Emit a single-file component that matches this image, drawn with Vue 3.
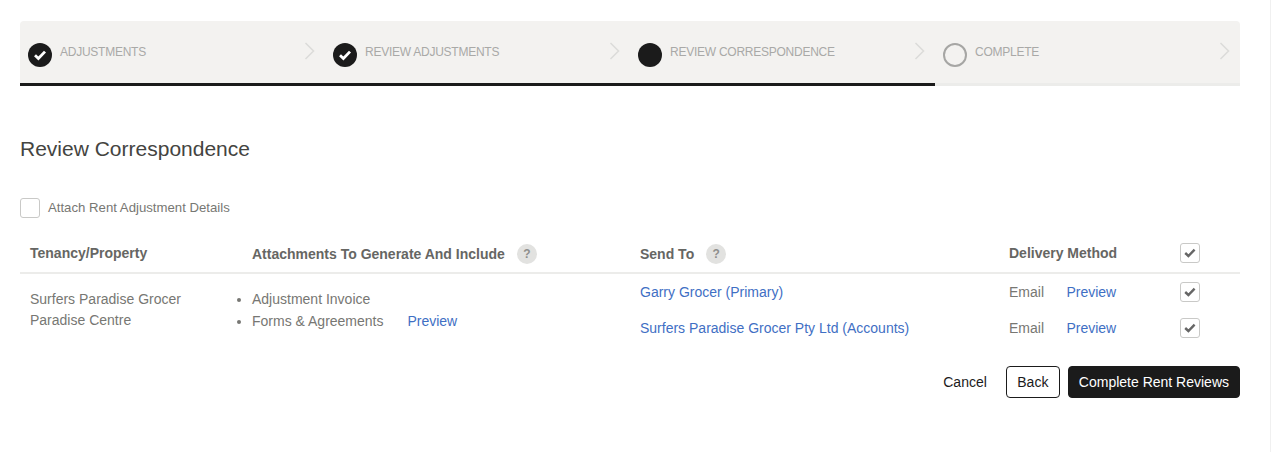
<script setup>
const steps = [
  { label: "ADJUSTMENTS", state: "done" },
  { label: "REVIEW ADJUSTMENTS", state: "done" },
  { label: "REVIEW CORRESPONDENCE", state: "current" },
  { label: "COMPLETE", state: "todo" },
];

const recipients = [
  { name: "Garry Grocer (Primary)" },
  { name: "Surfers Paradise Grocer Pty Ltd (Accounts)" },
];
</script>

<template>
  <div class="page">
    <div class="wizard">
      <div v-for="step in steps" :key="step.label" class="step">
        <span class="dot" :class="step.state">
          <svg v-if="step.state === 'done'" width="14" height="12" viewBox="0 0 14 12">
            <path d="M2 6.2 5.4 9.5 12 2.6" fill="none" stroke="#fff" stroke-width="2.8" />
          </svg>
        </span>
        <span class="step-label">{{ step.label }}</span>
        <svg class="chev" width="11" height="18" viewBox="0 0 11 18">
          <path d="M1.5 1 9.5 9 1.5 17" fill="none" stroke="#dcdcda" stroke-width="1.6" />
        </svg>
      </div>
      <div class="progress"><div class="progress-fill"></div></div>
    </div>

    <h2 class="title">Review Correspondence</h2>

    <div class="attach">
      <span class="box"></span>
      <span class="attach-label">Attach Rent Adjustment Details</span>
    </div>

    <div class="table-head row">
      <div class="c1">Tenancy/Property</div>
      <div class="c2 head-help">Attachments To Generate And Include <span class="help">?</span></div>
      <div class="c3 head-help">Send To <span class="help">?</span></div>
      <div class="c4">Delivery Method</div>
      <div class="c5">
        <span class="box checked">
          <svg width="12" height="10" viewBox="0 0 12 10"><path d="M1.2 5 4.4 8 10.6 1.6" fill="none" stroke="#666" stroke-width="2.4" /></svg>
        </span>
      </div>
    </div>

    <div class="table-body row">
      <div class="c1 tenant">
        <div>Surfers Paradise Grocer</div>
        <div>Paradise Centre</div>
      </div>
      <div class="c2">
        <ul class="docs">
          <li>Adjustment Invoice</li>
          <li>Forms &amp; Agreements <a class="link preview-doc">Preview</a></li>
        </ul>
      </div>
      <div class="recipients">
        <div v-for="r in recipients" :key="r.name" class="recipient">
          <div class="c3"><a class="link">{{ r.name }}</a></div>
          <div class="c4">Email <a class="link preview">Preview</a></div>
          <div class="c5">
            <span class="box checked">
              <svg width="12" height="10" viewBox="0 0 12 10"><path d="M1.2 5 4.4 8 10.6 1.6" fill="none" stroke="#666" stroke-width="2.4" /></svg>
            </span>
          </div>
        </div>
      </div>
    </div>

    <div class="actions">
      <a class="cancel">Cancel</a>
      <button class="btn back">Back</button>
      <button class="btn primary">Complete Rent Reviews</button>
    </div>
  </div>
</template>

<style>
body {
  background: #fff;
  min-height: 100vh;
  box-shadow: inset -1px 0 #f0f0f0;
}
</style>

<style scoped>
.page {
  width: 1220px;
  margin-left: 20px;
  padding-top: 21px;
  font-family: "Liberation Sans", Arial, sans-serif;
  font-size: 14px;
  color: #777773;
}
.wizard {
  position: relative;
  display: flex;
  height: 65px;
  background: #f3f2f0;
  border-radius: 4px 4px 0 0;
}
.step {
  width: 305px;
  display: flex;
  align-items: center;
  padding-left: 8px;
  box-sizing: border-box;
  position: relative;
}
.dot {
  width: 24px;
  height: 24px;
  border-radius: 50%;
  display: flex;
  align-items: center;
  justify-content: center;
  box-sizing: border-box;
  flex: none;
  margin-top: 2px;
}
.dot.done,
.dot.current {
  background: #1b1b1b;
}
.dot.todo {
  border: 2px solid #a6a6a4;
}
.step-label {
  margin-left: 8px;
  margin-bottom: 4px;
  font-size: 12px;
  color: #a9a9a7;
  letter-spacing: -0.25px;
}
.chev {
  position: absolute;
  right: 10px;
  top: 21px;
}
.progress {
  position: absolute;
  left: 0;
  right: 0;
  bottom: 0;
  height: 3px;
  background: #ececea;
}
.progress-fill {
  width: 915px;
  height: 3px;
  background: #1b1b1b;
}
.title {
  margin: 51px 0 0;
  font-size: 21px;
  font-weight: 400;
  line-height: 24px;
  color: #444441;
}
.attach {
  margin-top: 37px;
  display: flex;
  align-items: center;
  gap: 8px;
  font-size: 13.2px;
  height: 20px;
}
.attach-label {
  margin-bottom: 2px;
}
.box {
  width: 20px;
  height: 20px;
  box-sizing: border-box;
  border: 1px solid #c9c9c7;
  border-radius: 3px;
  display: inline-flex;
  align-items: center;
  justify-content: center;
  background: #fff;
  flex: none;
}
.row {
  display: flex;
}
.table-head {
  margin-top: 16px;
  height: 38px;
  align-items: center;
  border-bottom: 2px solid #ececea;
  font-weight: 700;
  color: #666663;
}
.head-help {
  display: flex;
  align-items: center;
  padding-top: 2px;
}
.c1 {
  width: 232px;
  padding-left: 10px;
  box-sizing: border-box;
  flex: none;
}
.c2 {
  width: 388px;
  flex: none;
}
.c3 {
  width: 369px;
  flex: none;
}
.c4 {
  width: 170.5px;
  flex: none;
}
.c5 {
  display: flex;
}
.help {
  display: inline-block;
  width: 20px;
  height: 20px;
  line-height: 20px;
  border-radius: 50%;
  background: #e2e2e0;
  color: #8f8f8d;
  font-size: 12px;
  text-align: center;
  margin-left: 12px;
}
.table-body {
  padding-top: 7px;
}
.tenant {
  line-height: 21px;
  padding-top: 8px;
}
.docs {
  margin: 7px 0 0;
  padding: 0;
  list-style: none;
}
.docs li {
  position: relative;
  line-height: 22px;
}
.docs li::before {
  content: "";
  position: absolute;
  left: -15px;
  top: 10px;
  width: 4px;
  height: 4px;
  border-radius: 50%;
  background: #777773;
}
.link {
  color: #3f6fc4;
  cursor: pointer;
}
.preview-doc {
  margin-left: 20px;
}
.preview {
  margin-left: 18.5px;
}
.recipient {
  display: flex;
  align-items: center;
  height: 36px;
}
.recipient:first-child {
  margin-top: -7px;
}
.actions {
  margin-top: 20px;
  display: flex;
  justify-content: flex-end;
  align-items: center;
}
.cancel {
  color: #1b1b1b;
  margin-right: 19px;
}
.btn {
  height: 32px;
  box-sizing: border-box;
  border-radius: 4px;
  font-family: inherit;
  font-size: 14px;
  border: 1px solid #1b1b1b;
  padding: 0 10px;
}
.back {
  min-width: 54px;
  background: #fff;
  color: #1b1b1b;
  margin-right: 8px;
}
.primary {
  background: #1b1b1b;
  color: #fff;
}
</style>
